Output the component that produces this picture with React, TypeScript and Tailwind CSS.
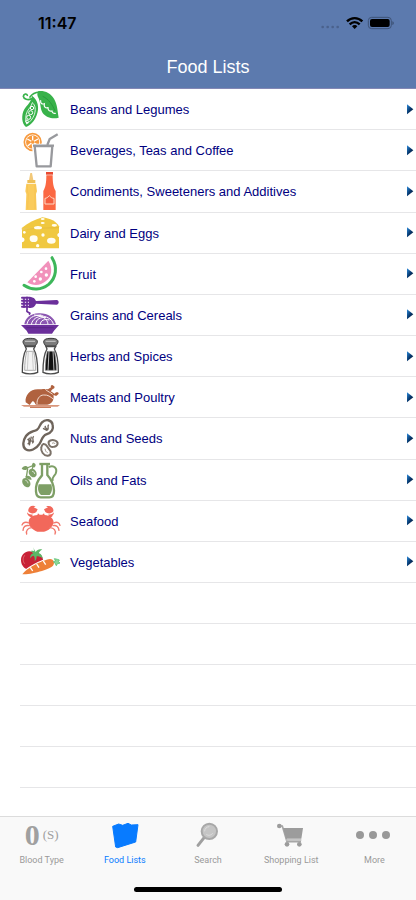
import type { ReactNode } from "react";

function Icon({ viewBox, children }: { viewBox: string; children: ReactNode }) {
  return (
    <svg viewBox={viewBox} className="size-10 shrink-0" fill="none" aria-hidden="true">
      {children}
    </svg>
  );
}

const foods: { label: string; icon: ReactNode }[] = [
  {
    label: "Beans and Legumes",
    icon: (
      <Icon viewBox="33 3 120 120">
        <path d="M64 32c-10 6-23 1-24-7 1-8 10-9 12-3M60 27c6-9 16-14 29-15" stroke="#38b24a" strokeWidth="5" strokeLinecap="round" />
        <path d="M66 23c18 12 23 36 14 59-6 17-18 30-32 35-13-9-15-35-5-53 8-14 20-20 23-41z" fill="#38b24a" />
        <path d="M86 9c18-2 36 6 46 23 10 17 11 38 14 57-17 4-37 1-48-14-9-15-4-30-15-50-2-7-1-13 3-16z" fill="#38b24a" />
        <path d="M67 44c9 7 11 21 6 36-5 13-13 22-23 28-5-13-3-27 2-38 6-10 12-15 15-26z" stroke="#fff" strokeWidth="2.5" />
        <g stroke="#fff" strokeWidth="3">
          <circle cx="66" cy="60" r="5" />
          <circle cx="62" cy="74" r="6" />
          <circle cx="56" cy="88" r="6" />
          <circle cx="51" cy="100" r="4" />
        </g>
        <path d="M92 38c-1 8 4 12 11 9-2 9 3 14 11 12 0 8 5 12 12 10 1 6 5 8 10 7" stroke="#fff" strokeWidth="3.5" strokeLinecap="round" />
        <path d="M98 25c18 8 30 26 37 44" stroke="#279b3b" strokeWidth="3" />
      </Icon>
    ),
  },
  {
    label: "Beverages, Teas and Coffee",
    icon: (
      <Icon viewBox="33 126 120 120">
        <circle cx="68" cy="162" r="25" fill="#fff" stroke="#f79a3e" strokeWidth="5" />
        <circle cx="68" cy="162" r="20" fill="#f79a3e" />
        <path d="M68 162V144M68 162l-16-9M68 162l16-9M68 162l-15 12M68 162l15 10" stroke="#fff" strokeWidth="4" />
        <circle cx="68" cy="162" r="5" fill="#f79a3e" />
        <path d="M65 167h71l-7 76H74z" fill="#fff" />
        <path d="M74 174h53l-5 61H80zM69 173h63" stroke="#98999d" strokeWidth="7" strokeLinejoin="round" />
        <path d="M112 171l7-18 24-14" stroke="#98999d" strokeWidth="7" />
      </Icon>
    ),
  },
  {
    label: "Condiments, Sweeteners and Additives",
    icon: (
      <Icon viewBox="33 4 120 120">
        <path d="M61 10h5l4 22H57z" fill="#f2c879" />
        <path d="M52 31h24v9H52z" fill="#eebf57" />
        <path d="M49 42h29l3 23-3 8 2 48H47l2-48-3-8z" fill="#facb5c" />
        <path d="M52 45v20l3 8-2 45M75 45v73" stroke="#f6c04c" strokeWidth="2" />
        <path d="M108 7h21v8h-21z" fill="#e94b32" />
        <path d="M109 17h19c0 22 2 36 9 47v57h-37V64c7-12 9-25 9-47z" fill="#fb6843" />
        <path d="M105 86c5 0 8-3 13-8 5 5 8 8 14 8v17h-27z" fill="#f45d3e" stroke="#ffdac6" strokeWidth="3" />
      </Icon>
    ),
  },
  {
    label: "Dairy and Eggs",
    icon: (
      <Icon viewBox="33 128 120 120">
        <path d="M35 173c19-15 39-25 62-32 24 3 42 12 50 27v7H36z" fill="#f0c840" />
        <path d="M36 177l111-5v16c-6 1-7 10 0 12v34H36v-18c9-1 11-13 0-15z" fill="#f0c840" />
        <path d="M35 176l112-4" stroke="#e0b232" strokeWidth="2" />
        <g fill="#fffdf2">
          <ellipse cx="84" cy="172" rx="12" ry="5" />
          <ellipse cx="133" cy="165" rx="8" ry="4" />
          <ellipse cx="98" cy="146" rx="6" ry="3" />
          <ellipse cx="98" cy="158" rx="6" ry="3" />
          <ellipse cx="71" cy="205" rx="12" ry="10" />
          <ellipse cx="124" cy="211" rx="13" ry="9" />
          <circle cx="99" cy="194" r="5" />
          <circle cx="83" cy="226" r="5" />
          <circle cx="43" cy="186" r="4" />
        </g>
      </Icon>
    ),
  },
  {
    label: "Fruit",
    icon: (
      <Icon viewBox="33 5 120 120">
        <path d="M115 25c14 22 11 49-8 62-16 14-39 14-55 3z" fill="#f191bb" />
        <path d="M126 16c17 28 13 60-10 80-21 17-50 19-74 3" stroke="#3db65a" strokeWidth="9" strokeLinecap="round" />
        <g fill="#fff">
          <circle cx="108" cy="49" r="4" />
          <circle cx="94" cy="59" r="4" />
          <circle cx="109" cy="68" r="5" />
          <circle cx="77" cy="73" r="4" />
          <circle cx="91" cy="80" r="5" />
          <circle cx="73" cy="87" r="4" />
        </g>
      </Icon>
    ),
  },
  {
    label: "Grains and Cereals",
    icon: (
      <Icon viewBox="33 128 120 120">
        <path d="M36 136h24M36 145h24M36 154h24M36 163h24" stroke="#6b2f9b" strokeWidth="6" strokeLinecap="round" />
        <path d="M57 134c14 0 18 5 21 12l62-3c8 1 8 13 0 14l-62-3c-3 8-8 13-21 13z" fill="#6b2f9b" />
        <path d="M42 134v32M51 133v40c-4 10 16 5 6 14" stroke="#6b2f9b" strokeWidth="5" />
        <path d="M43 216c2-18 18-32 43-33 28-1 47 13 52 33z" fill="#8c57b2" />
        <path d="M51 215c4-18 19-27 43-27M64 217c3-17 17-25 35-26M77 217c1-18 15-23 31-21M91 217c0-13 12-18 27-14M114 216c-1-17-19-27-42-28M130 215c-4-16-22-24-42-25" stroke="#fff" strokeWidth="3" />
        <path d="M33 218h114l-15 17-6 9H55l-5-9z" fill="#6b2f9b" />
        <path d="M49 226h82" stroke="#55217f" strokeWidth="2" />
      </Icon>
    ),
  },
  {
    label: "Herbs and Spices",
    icon: (
      <Icon viewBox="33 6 120 120">
        {[0, 62].map((x) => (
          <g key={x} transform={`translate(${x} 0)`}>
            <path d="M40 28c-4-10 4-15 21-15s24 5 20 15l-6 8H45z" fill="#7b7b7b" stroke="#3b3b3b" strokeWidth="3" />
            <path d="M45 22h30" stroke="#bbb" strokeWidth="4" />
            <path d="M46 38h29l-4 7c8 13 12 41 12 70-13 6-33 6-46 0 0-29 4-57 12-70z" fill="#fff" stroke="#4b4b4b" strokeWidth="4" />
            <path d="M50 52c-4 17-6 37-6 57h33c0-20-2-40-6-57z" fill={x ? "#111" : "#f4f4f4"} stroke="#888" strokeWidth="2" />
            <path d="M55 51l-3 59M67 51l3 59" stroke={x ? "#ddd" : "#c4c4c4"} strokeWidth="2.5" />
          </g>
        ))}
      </Icon>
    ),
  },
  {
    label: "Meats and Poultry",
    icon: (
      <Icon viewBox="33 129 120 120">
        <path d="M47 205c-3-20 13-39 36-39 12 0 21-3 31 0l9-6c-3-5 3-9 7-5 6 2 4 9-1 9l-7 8 12 7c4-6 12-5 12 0-1 3-5 3-6 6-5 1-7-3-10-1 4 12-4 27-18 28H77c-4-8-6-12-11-9l-7 10z" fill="#b0623f" />
        <path d="M81 211c-1-15 7-28 20-28 13-1 20 5 30 13M106 166c8 7 16 10 22 15" stroke="#fff4ee" strokeWidth="2.5" />
        <path d="M64 212l7-8 6 9z" fill="#fff" />
        <path d="M33 213h117l-7 5H42z" fill="#d9967b" />
        <path d="M60 220h63" stroke="#c97b5b" strokeWidth="4" />
      </Icon>
    ),
  },
  {
    label: "Nuts and Seeds",
    icon: (
      <Icon viewBox="33 7 120 120">
        <path d="M96 20c11-11 29-8 32 7 4 17-7 25-19 29-12 4-13 16-20 28-10 16-29 25-42 17-11-8-8-27 1-40 10-14 24-13 33-19 8-5 7-14 15-22z" stroke="#6f655c" strokeWidth="7" />
        <path d="M107 31c-7 8 9 5 2 14M116 27c-6 8 3 9-4 17M99 38l12 6M59 66c-11 11 7 8-6 20M71 62c-9 9 5 11-4 21M52 71l20 8M64 63l-6 26" stroke="#6f655c" strokeWidth="4" />
        <path d="M116 83c-2-8 9-12 20-8 10 4 9 15-3 18-10 3-17-3-17-10zM100 85c11-1 10 8 17 15 9 9 6 20-4 20-12 1-22-14-19-25 1-5 3-8 6-10z" fill="#fff" stroke="#7b7168" strokeWidth="6" />
        <path d="M126 83c5-3 8-1 9 2M105 99c1 7 4 11 8 12" stroke="#a49a91" strokeWidth="3" />
      </Icon>
    ),
  },
  {
    label: "Oils and Fats",
    icon: (
      <Icon viewBox="33 130 120 120">
        <path d="M88 142h32" stroke="#7e9f66" strokeWidth="7" />
        <path d="M96 144v32c-14 15-20 30-18 49 1 12 7 17 14 17h26c10 0 14-8 14-20-1-20-8-34-20-47v-31" stroke="#7e9f66" strokeWidth="7" />
        <path d="M86 203h38c4 14 2 24-5 32H93c-9-8-11-18-7-32z" fill="#7e9f66" />
        <path d="M116 151c17-7 27 4 21 20-5 10-12 10-9 22" stroke="#7e9f66" strokeWidth="6" />
        <path d="M35 156c5-10 14-11 21-3-6 8-14 9-21 3zM69 138c9 2 11 9 3 15-7-5-8-9-3-15z" fill="#7e9f66" />
        <path d="M51 154l19-8-4 13M53 156l-5 32" stroke="#7e9f66" strokeWidth="4" />
        <ellipse cx="68" cy="169" rx="11" ry="14" transform="rotate(-35 68 169)" fill="#7e9f66" />
        <ellipse cx="49" cy="198" rx="11" ry="15" transform="rotate(-35 49 198)" fill="#7e9f66" />
        <path d="M46 179c10-4 17 0 19 10-8 1-16-2-19-10z" fill="#7e9f66" />
        <path d="M66 164c5 0 7 3 8 8M46 191c5 1 7 4 8 9" stroke="#fff" strokeWidth="2" />
      </Icon>
    ),
  },
  {
    label: "Seafood",
    icon: (
      <Icon viewBox="33 2 120 120">
        <path d="M56 65c1-15 13-20 26-21l2-5 5 4h8l5-4 2 5c16 2 26 9 27 22-3 15-16 26-29 28H82C68 89 57 79 56 65z" fill="#f2685b" />
        <path d="M83 27L71 21l6-3C63 12 53 23 55 33c5 8 18 8 24 2zM102 27l12-6-6-3c15-5 24 5 22 15-5 8-18 8-24 2z" fill="#f2685b" />
        <path d="M51 36c4 6 12 7 18 7l-4 7c-8-1-14-6-14-14zM132 36c-4 6-12 7-18 7l4 7c8-1 14-6 14-14z" fill="#f2685b" />
        <path d="M57 68c-11-5-18-1-21 6M58 76c-12-2-18 3-19 14M65 82c-11 1-18 8-15 19M131 68c11-5 17-1 19 7M129 76c11-2 17 4 18 14M120 82c12 1 19 8 15 19" stroke="#f2786d" strokeWidth="4" strokeLinecap="round" />
        <path d="M60 46l8 5M126 46l-8 5" stroke="#f2685b" strokeWidth="5" />
      </Icon>
    ),
  },
  {
    label: "Vegetables",
    icon: (
      <Icon viewBox="33 125 120 120">
        <path d="M68 156c-15-9-35 4-35 23 0 13 7 23 17 27l48-15c6-20-8-38-30-35z" fill="#c82237" />
        <path d="M44 165c-6 8-6 18 0 25" stroke="#e16b72" strokeWidth="3" />
        <path d="M70 141c2 7 5 10 7 14 5-7 11-10 20-7-6 2-9 6-11 11 7 1 11 7 12 16-6-6-12-7-18-7 0 7-2 11-6 15 1-9 0-13-3-17-5 1-8 4-11 8 0-8 4-14 10-15-3-3-5-5-9-6 6-3 11-1 12 1z" fill="#5bb867" />
        <path d="M37 222c12-18 57-42 83-46 12 0 15 12 9 20-11 12-65 26-92 26z" fill="#fff" stroke="#fff" strokeWidth="6" />
        <path d="M37 222c12-18 57-42 83-46 12 0 15 12 9 20-11 12-65 26-92 26z" fill="#ee8038" />
        <path d="M61 201l7 11M80 191l7 11M100 182l7 11" stroke="#fff" strokeWidth="4" />
        <path d="M130 184l7-2-4-7 9 2 6 2-3 5 5 4-8 2-3 6-4-8z" fill="#8bd79a" stroke="#6bc880" strokeWidth="3" />
      </Icon>
    ),
  },
];

const tabs: { label: string; icon: ReactNode; active?: boolean }[] = [
  {
    label: "Blood Type",
    icon: (
      <span className="flex h-8 items-center justify-center gap-[3px] font-['Liberation_Serif',serif] text-[#a0a0a0]">
        <span className="text-[30px] leading-8 font-bold">0</span>
        <span className="text-[13px] leading-8">(S)</span>
      </span>
    ),
  },
  {
    label: "Food Lists",
    active: true,
    icon: (
      <TabIcon viewBox="302 27 144 96">
        <path d="M337 49l18-7 12 4 16-6 10 5 20-1-7 52-54 17-6-2z" fill="#087bff" stroke="#087bff" strokeWidth="3" strokeLinejoin="round" />
      </TabIcon>
    ),
  },
  {
    label: "Search",
    icon: (
      <TabIcon viewBox="552 27 144 96">
        <path d="M613 82l-19 24" stroke="#a0a0a0" strokeWidth="9" strokeLinecap="round" />
        <circle cx="628" cy="64" r="23" fill="#c5c5c5" stroke="#a8a8a8" strokeWidth="6" />
        <path d="M614 64c0-8 6-14 14-14M619 73c6 5 14 3 19-3" stroke="#dedede" strokeWidth="3" />
      </TabIcon>
    ),
  },
  {
    label: "Shopping List",
    icon: (
      <TabIcon viewBox="184 27 144 96">
        <path d="M218 48h12l14 47h42" stroke="#a6a6a6" strokeWidth="5" />
        <circle cx="221" cy="48" r="7" fill="#9c9c9c" />
        <path d="M232 54h60l-5 32h-46z" fill="#9c9c9c" />
        <path d="M241 90h46" stroke="#bcbcbc" strokeWidth="5" />
        <circle cx="244" cy="103" r="7" fill="#9c9c9c" />
        <circle cx="281" cy="103" r="7" fill="#9c9c9c" />
      </TabIcon>
    ),
  },
  {
    label: "More",
    icon: (
      <TabIcon viewBox="433 27 144 96">
        <g fill="#999">
          <circle cx="463" cy="75" r="12" />
          <circle cx="502" cy="75" r="12" />
          <circle cx="541" cy="75" r="12" />
        </g>
      </TabIcon>
    ),
  },
];

function TabIcon({ viewBox, children }: { viewBox: string; children: ReactNode }) {
  return (
    <svg viewBox={viewBox} className="h-8 w-12" fill="none" aria-hidden="true">
      {children}
    </svg>
  );
}

function StatusBar() {
  return (
    <div className="flex h-11 items-center justify-between pt-0.5 pr-[22px] pl-[38px]">
      <time className="font-[Inter,sans-serif] text-base leading-5 font-semibold text-black">11:47</time>
      <svg viewBox="0 0 219 42" className="h-3.5 w-[73px]" fill="none" aria-hidden="true">
        <g fill="#4a618c">
          <circle cx="5" cy="33" r="4" />
          <circle cx="20" cy="33" r="4" />
          <circle cx="35" cy="33" r="4" />
          <circle cx="50" cy="33" r="4" />
        </g>
        <g stroke="#000" strokeWidth="7">
          <path d="M78 16c13-13 33-13 46 0" />
          <path d="M86 25c9-9 21-9 30 0" />
        </g>
        <path d="M93 31c4-5 12-5 16 0l-8 8z" fill="#000" />
        <rect x="142" y="4" width="69" height="34" rx="10" stroke="#3e5378" strokeWidth="3" />
        <rect x="147" y="9" width="59" height="24" rx="6" fill="#000" />
        <path d="M214 16c6 2 6 9 0 11z" fill="#3e5378" />
      </svg>
    </div>
  );
}

function Arrow() {
  return (
    <svg viewBox="0 0 24 33" className="h-[11px] w-2 shrink-0" aria-hidden="true">
      <defs>
        <linearGradient id="arrow" x1="0" y1="0" x2="1" y2="1">
          <stop stopColor="#2d8de0" />
          <stop offset=".5" stopColor="#07396f" />
          <stop offset="1" stopColor="#020d24" />
        </linearGradient>
      </defs>
      <path d="M3 1l19 15L3 31z" fill="url(#arrow)" />
    </svg>
  );
}

export default function App() {
  return (
    <div className="flex min-h-screen flex-col bg-white font-['Liberation_Sans',Arial,sans-serif]">
      <header className="border-b border-[#8388b5] bg-[#5c7aae]">
        <StatusBar />
        <h1 className="h-11 text-center text-lg leading-[46px] text-white">Food Lists</h1>
      </header>

      <main className="flex-1">
        <ul className="ml-5 grid min-h-[494px] auto-rows-fr">
          {foods.map((food) => (
            <li key={food.label} className="border-b border-[#e6e6e8]">
              <a href="#" className="flex h-full items-center pr-0.5 pl-px text-[#000080]">
                {food.icon}
                <span className="ml-[9px] min-w-0 flex-1 pt-0.5 text-[13px] leading-5">{food.label}</span>
                <Arrow />
              </a>
            </li>
          ))}
        </ul>
        <div className="ml-5" aria-hidden="true">
          {[1, 2, 3, 4, 5].map((row) => (
            <div key={row} className="h-[41px] border-b border-[#e6e6e8]" />
          ))}
        </div>
      </main>

      <footer className="border-t border-[#dcdcdc] bg-[#f9f9f9] pb-2">
        <nav className="flex pt-0.5" aria-label="Main">
          {tabs.map((tab) => (
            <button
              key={tab.label}
              type="button"
              aria-current={tab.active ? "page" : undefined}
              className={`flex flex-1 basis-0 flex-col items-center gap-px text-[9px] leading-4 ${tab.active ? "text-[#087bff]" : "text-[#999999]"}`}
            >
              {tab.icon}
              <span className="font-[Roboto,sans-serif]">{tab.label}</span>
            </button>
          ))}
        </nav>
        <div className="mx-auto mt-[19px] h-[5px] w-[148px] rounded-full bg-black" />
      </footer>
    </div>
  );
}
